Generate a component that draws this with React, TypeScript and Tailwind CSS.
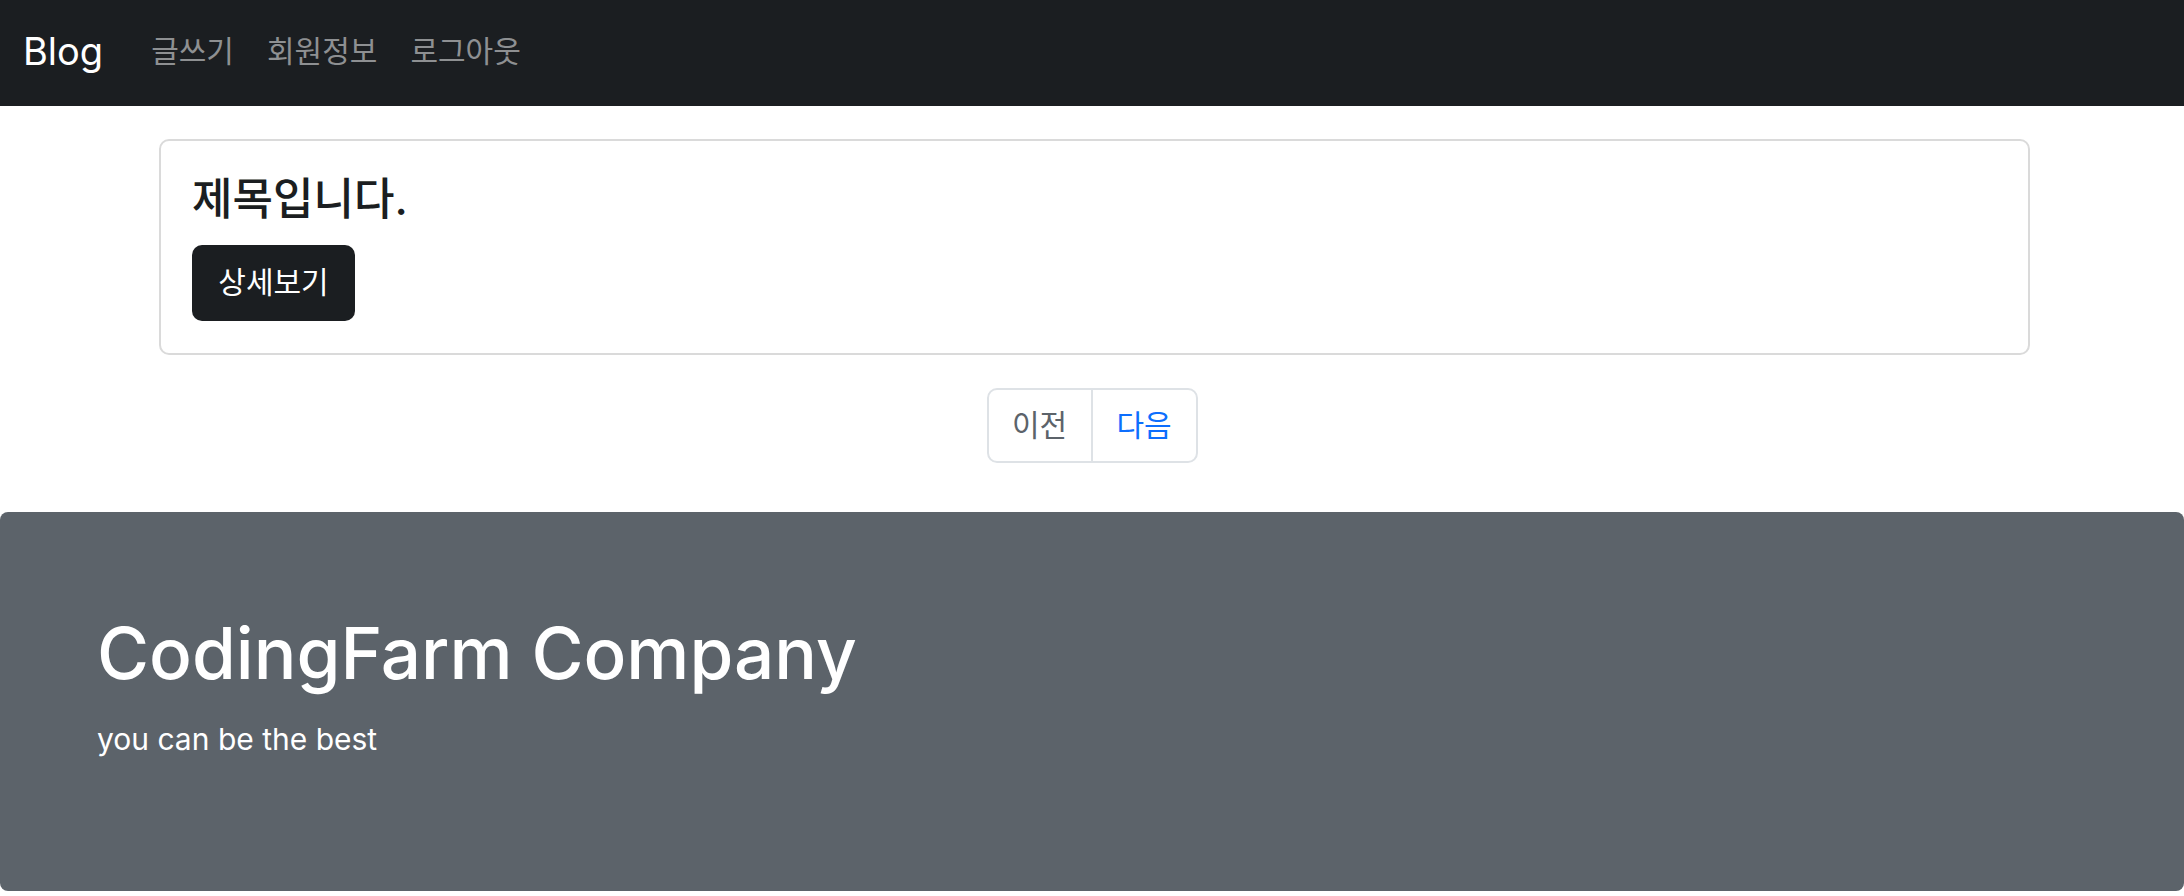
const font = { fontFamily: "Inter, 'Noto Sans CJK KR', 'Noto Sans', sans-serif" };

export default function App() {
  const links = ["글쓰기", "회원정보", "로그아웃"];

  return (
    <div className="min-h-[896px] bg-white" style={font}>
      {/* Navbar */}
      <nav className="flex items-center h-[106px] bg-[#1b1e21] pl-[23px] pb-[4px]">
        <a className="text-[38px] leading-none text-white">Blog</a>
        <ul className="flex items-center gap-[33px] ml-[48px]">
          {links.map((l) => (
            <li key={l} className="text-[30px] leading-none text-[#8e9092]">
              {l}
            </li>
          ))}
        </ul>
      </nav>

      {/* Post card */}
      <div className="ml-[159px] mr-[154px] mt-[33px] border-2 border-[#dadada] rounded-[10px] px-[31px] pt-[32px] pb-[32px]">
        <h4 className="text-[44px] leading-[1.2] font-medium text-[#1b1e21]">제목입니다.</h4>
        <button className="mt-[19px] w-[163px] h-[76px] flex items-center justify-center bg-[#1b1e21] rounded-[10px] text-[30px] text-white">
          상세보기
        </button>
      </div>

      {/* Pagination */}
      <div className="flex justify-center mt-[33px]">
        <div className="flex h-[75px] border-2 border-[#dee2e6] rounded-[10px]">
          <span className="w-[104px] flex items-center justify-center text-[30px] text-[#5c636a] border-r-2 border-[#dee2e6]">
            이전
          </span>
          <span className="w-[103px] flex items-center justify-center text-[30px] text-[#0d6efd]">
            다음
          </span>
        </div>
      </div>

      {/* Jumbotron footer */}
      <footer className="mt-[49px] h-[379px] bg-[#5c636a] rounded-lg pl-[97px] pt-[99px] text-white">
        <h1 className="text-[71px] leading-[1.2] font-medium">CodingFarm Company</h1>
        <p className="mt-[21px] text-[30px] leading-[1.5]">you can be the best</p>
      </footer>
    </div>
  );
}
